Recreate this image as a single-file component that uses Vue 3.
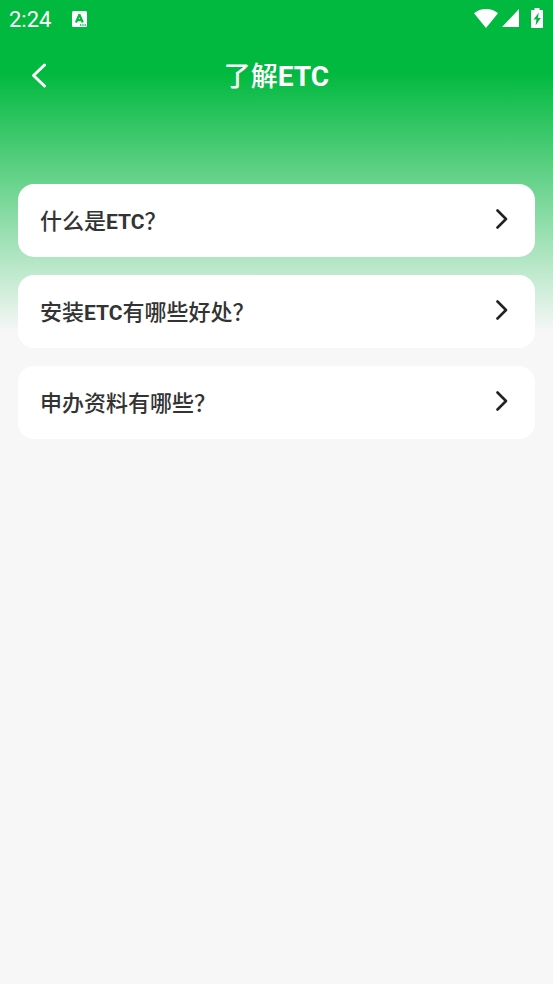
<script setup>
const questions = [
  [{ text: '什么是' }, { text: 'ETC', latin: true }, { text: '？' }],
  [{ text: '安装' }, { text: 'ETC', latin: true }, { text: '有哪些好处？' }],
  [{ text: '申办资料有哪些？' }],
]
</script>

<template>
  <div class="page">
    <div class="status">
      <span class="time">2:24</span>
      <svg class="input-icon" width="15" height="16" viewBox="0 0 15 16" aria-hidden="true">
        <rect width="15" height="16" rx="1.5" fill="#fff" />
        <path d="M4 11.500 7.200 4h.4l3.200 7.500M5.300 9.200h4.200" fill="none" stroke="#00b93e" stroke-width="2.2" />
        <path d="M8 14h1.300M10.300 14h1.300M12.600 14h1.300" stroke="#00b93e" stroke-width="1.300" />
      </svg>
      <div class="signals">
        <svg width="24" height="19" viewBox="0 0 24 19" aria-hidden="true">
          <path d="M0 4.200C3.200 1.500 7.400 0 12 0s8.800 1.500 12 4.200L12 19z" fill="#fff" />
        </svg>
        <svg width="17" height="18" viewBox="0 0 17 18" aria-hidden="true">
          <path d="M17 0v18H0z" fill="#fff" />
        </svg>
        <svg class="battery" width="12" height="20" viewBox="0 0 12 20" aria-hidden="true">
          <path d="M3.500 0h5v2H11q1 0 1 1v16q0 1-1 1H1q-1 0-1-1V3q0-1 1-1h2.500z" fill="#fff" />
          <path d="M7.800 4.500 2.600 11.500h2.800L4.600 17.500l5.200-7.400H6.900z" fill="#00b93e" />
        </svg>
      </div>
    </div>

    <header class="header">
      <button class="back" type="button" aria-label="返回">
        <svg width="16" height="26" viewBox="0 0 16 26" aria-hidden="true">
          <path d="M13.500 2 2.500 12.500l11 10.500" />
        </svg>
      </button>
      <h1 class="title">了解<span class="latin">ETC</span></h1>
    </header>

    <main class="list">
      <button v-for="(parts, index) in questions" :key="index" class="card" type="button">
        <span><span v-for="part in parts" :key="part.text" :class="{ latin: part.latin }">{{ part.text }}</span></span>
        <svg width="12" height="20" viewBox="0 0 12 20" aria-hidden="true">
          <path d="M1.500 1.500 10 10l-8.500 8.500" />
        </svg>
      </button>
    </main>
  </div>
</template>

<style>
body {
  margin: 0;
  background: #f7f7f7;
}
</style>

<style scoped>
.page {
  min-height: 100vh;
  background: #f7f7f7 linear-gradient(#00b93e 72px, #f7f7f7 332px) no-repeat;
  font-family: Roboto, "Noto Sans CJK SC", sans-serif;
}

.status {
  display: flex;
  align-items: center;
  height: 38px;
  padding: 0 10px 0 9px;
  color: #fff;
}

.time {
  font-size: 22px;
  line-height: 40px;
  padding-top: 2px;
}

.input-icon {
  margin-left: 21px;
}

.signals {
  display: flex;
  align-items: center;
  gap: 4px;
  height: 36px;
  align-self: flex-start;
  margin-left: auto;
}

.battery {
  margin-left: 8px;
}

.header {
  display: grid;
  grid-template-columns: 48px 1fr 48px;
  align-items: center;
  height: 76px;
  padding: 0 16px;
}

.back {
  display: flex;
  align-items: center;
  height: 48px;
  padding: 0 15px;
  border: 0;
  background: none;
}

.back path {
  fill: none;
  stroke: #fff;
  stroke-width: 3;
  stroke-linecap: round;
  stroke-linejoin: round;
}

.title {
  margin: 0;
  padding-top: 2px;
  color: #fff;
  font-size: 27px;
  font-weight: 500;
  line-height: 40px;
  text-align: center;
}

.latin {
  font-weight: 700;
}

.title .latin {
  font-size: 28px;
}

.list {
  display: flex;
  flex-direction: column;
  gap: 18px;
  padding: 70px 18px 18px;
}

.card {
  display: flex;
  align-items: center;
  justify-content: space-between;
  min-height: 73px;
  padding: 0 27px 4px 22px;
  border: 0;
  border-radius: 16px;
  background: #fff;
  color: #333;
  font-family: inherit;
  font-size: 22px;
  font-weight: 500;
  line-height: 32px;
  text-align: left;
}

.card > span {
  padding-top: 6px;
}

.card .latin {
  font-size: 21px;
}

.card path {
  fill: none;
  stroke: #222;
  stroke-width: 2.6;
  stroke-linecap: round;
  stroke-linejoin: round;
}
</style>
